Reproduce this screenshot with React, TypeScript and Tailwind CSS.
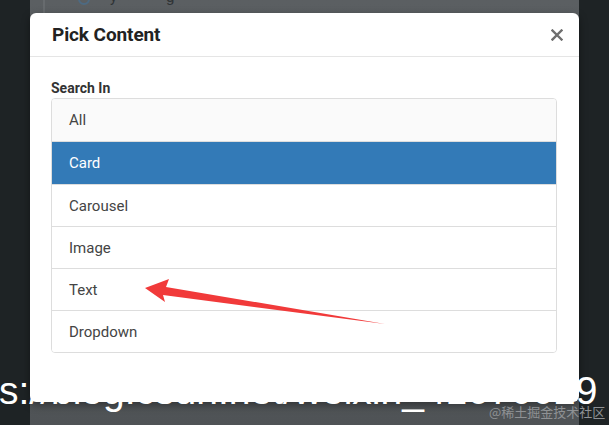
import React from "react";

const items = ["All", "Card", "Carousel", "Image", "Text", "Dropdown"];

export default function App() {
  const active = "Card";

  return (
    <div className="relative w-[609px] h-[425px] overflow-hidden bg-[#1e2325] font-['Roboto',sans-serif]">
      {/* page behind the backdrop */}
      <div className="ml-[30px] w-[549px] h-full bg-gradient-to-b from-[#5b5f62] to-[#4f5356] relative">
        <div className="absolute left-[13px] top-0 w-[2px] h-[13px] bg-[#676b6e]" />
        <div className="absolute left-[48px] top-[-7px] w-[12px] h-[12px] rounded-full border-2 border-[#4d6a82]" />
        <span className="absolute left-[80px] top-[-14px] text-[15px] text-[#2f3335]">y</span>
        <span className="absolute left-[136px] top-[-14px] text-[15px] text-[#2f3335]">g</span>

        {/* modal */}
        <div className="relative top-[13px] w-[549px] h-[389px] bg-white rounded-md shadow-[0_3px_9px_rgba(0,0,0,0.4)]">
          <div className="h-[44px] flex items-center justify-between pl-[22px] pr-[16px] border-b border-[#e5e5e5]">
            <h4 className="text-[19px] font-bold text-[#222] leading-none tracking-[-0.1px]">Pick Content</h4>
            <svg width="12" height="12" viewBox="0 0 12 12" className="mt-[1px]">
              <path d="M1.5 1.5 L10.5 10.5 M10.5 1.5 L1.5 10.5" stroke="#6e6e6e" strokeWidth="2.4" strokeLinecap="square" />
            </svg>
          </div>
          <div className="pl-[21px] pr-[22px] pt-[21px]">
            <label className="block text-[14px] font-bold text-[#333] leading-[20px]">Search In</label>
            <div className="border border-[#ddd] rounded-[4px] overflow-hidden">
              {items.map((item, idx) => (
                <div
                  key={item}
                  className={`h-[42px] flex items-center px-[17px] pt-[1px] text-[15px] ${
                    idx > 0 ? "border-t border-[#ddd]" : ""
                  } ${
                    item === active
                      ? "bg-[#337ab7] text-white border-[#337ab7] h-[43px]"
                      : idx === 0
                      ? "bg-[#fafafa] text-[#444]"
                      : "bg-white text-[#444]"
                  }`}
                >
                  {item}
                </div>
              ))}
            </div>
          </div>
        </div>
      </div>

      {/* red annotation arrow */}
      <svg className="absolute left-0 top-0 pointer-events-none" width="609" height="425">
        <path d="M145 288 L169 279 L166 287 L385 324 L163 295 L165 302 Z" fill="#f13a3a" />
      </svg>

      {/* screenshot watermarks */}
      <div className="absolute left-[-1px] top-[371px] text-[39px] leading-[39px] text-white whitespace-nowrap font-['Liberation_Sans',sans-serif]">
        s://blog.csdn.net/weixin_41670029
      </div>
      <div className="absolute left-[489px] top-[404px] text-[13px] leading-[16px] text-[#8e9194] whitespace-nowrap font-['Noto_Sans_CJK_SC',sans-serif]">
        @稀土掘金技术社区
      </div>
    </div>
  );
}
